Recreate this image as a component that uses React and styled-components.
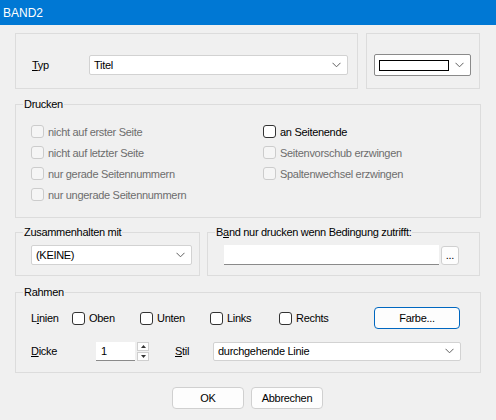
import React from "react";
import styled, { createGlobalStyle } from "styled-components";

const GlobalStyle = createGlobalStyle`
  html, body { margin: 0; padding: 0; background: #f0f0f0; }
  body {
    font-family: "Liberation Sans", Arial, sans-serif;
    font-size: 11px;
    letter-spacing: -0.3px;
    color: #000;
  }
`;

const Window = styled.div`
  width: 496px;
  height: 420px;
  background: #f0f0f0;
  display: flex;
  flex-direction: column;
  overflow: hidden;
`;

const TitleBar = styled.div`
  height: 25px;
  background: #0078d4;
  color: #fff;
  font-size: 12px;
  letter-spacing: 0;
  display: flex;
  align-items: center;
  padding-left: 3px;
  flex-shrink: 0;
`;

const Content = styled.div`
  display: flex;
  flex-direction: column;
  padding: 8px 16px 0 15px;
`;

const Row = styled.div`
  display: flex;
  gap: ${(p) => p.gap || 0}px;
  margin-top: ${(p) => p.mt || 0}px;
  justify-content: ${(p) => p.justify || "flex-start"};
`;

const Group = styled.div`
  position: relative;
  box-sizing: border-box;
  border: 1px solid #dcdcdc;
  width: ${(p) => p.w}px;
  height: ${(p) => p.h}px;
  margin-top: ${(p) => p.mt || 0}px;
  padding: ${(p) => p.pad || "0"};
`;

const Legend = styled.span`
  position: absolute;
  top: -7px;
  left: 7px;
  padding: 0 1px;
  background: #f0f0f0;
  line-height: 13px;
`;

const Label = styled.span`
  display: inline-block;
  width: ${(p) => p.w}px;
  margin-left: ${(p) => p.ml || 0}px;
  flex-shrink: 0;
`;

const Combo = styled.div`
  box-sizing: border-box;
  width: ${(p) => p.w}px;
  height: ${(p) => p.h || 20}px;
  background: #fff;
  border: 1px solid ${(p) => (p.dark ? "#8a8a8a" : "#d2d2d2")};
  border-radius: 2px;
  display: flex;
  align-items: center;
  padding: 0 6px 0 4px;
  justify-content: space-between;
`;

const Swatch = styled.div`
  width: 70px;
  height: 11px;
  box-sizing: border-box;
  border: 1px solid #000;
  background: #fff;
`;

const Chevron = () => (
  <svg width="9" height="6" viewBox="0 0 9 6">
    <path d="M0.5 0.8 L4.5 4.8 L8.5 0.8" fill="none" stroke="#606060" strokeWidth="1" />
  </svg>
);

const CheckGrid = styled.div`
  display: grid;
  grid-template-columns: 232px 1fr;
  grid-auto-flow: column;
  grid-template-rows: repeat(4, 21px);
  padding: 16px 0 0 15px;
`;

const CheckItem = styled.label`
  display: flex;
  align-items: center;
  gap: 4px;
  color: ${(p) => (p.disabled ? "#6d6d6d" : "#000")};
  width: ${(p) => (p.w ? p.w + "px" : "auto")};
  flex-shrink: 0;
`;

const Box = styled.span`
  box-sizing: border-box;
  width: 13px;
  height: 13px;
  border-radius: 3px;
  border: 1px solid ${(p) => (p.disabled ? "#cccccc" : "#333333")};
  background: ${(p) => (p.disabled ? "#f5f5f5" : "#fff")};
  flex-shrink: 0;
`;

const Check = ({ children, disabled, w }) => (
  <CheckItem disabled={disabled} w={w}>
    <Box disabled={disabled} />
    {children}
  </CheckItem>
);

const TextInput = styled.div`
  box-sizing: border-box;
  width: ${(p) => p.w}px;
  height: ${(p) => p.h || 20}px;
  background: #fff;
  border-bottom: 1px solid #8a8a8a;
  display: flex;
  align-items: center;
  padding-left: 5px;
`;

const Button = styled.div`
  box-sizing: border-box;
  width: ${(p) => p.w}px;
  height: ${(p) => p.h || 22}px;
  margin-left: ${(p) => p.ml || 0}px;
  background: #fdfdfd;
  border: 1px solid ${(p) => (p.primary ? "#0067c0" : "#d0d0d0")};
  border-radius: ${(p) => p.r || 4}px;
  display: flex;
  align-items: center;
  justify-content: center;
  flex-shrink: 0;
`;

const Line = styled.div`
  display: flex;
  align-items: center;
  height: ${(p) => p.h || 20}px;
  margin-top: ${(p) => p.mt || 0}px;
`;

const Spinner = styled.div`
  display: flex;
  flex-direction: column;
  gap: 1px;
  margin-left: 2px;
`;

const SpinBtn = styled.div`
  box-sizing: border-box;
  width: 12px;
  height: 9px;
  border: 1px solid #cfcfcf;
  background: #fdfdfd;
  display: flex;
  align-items: center;
  justify-content: center;
`;

const Tri = ({ down }) => (
  <svg width="5" height="3" viewBox="0 0 5 3">
    <path d={down ? "M0 0 L5 0 L2.5 3 Z" : "M0 3 L5 3 L2.5 0 Z"} fill="#333" />
  </svg>
);

export default function App() {
  return (
    <Window>
      <GlobalStyle />
      <TitleBar>BAND2</TitleBar>
      <Content>
        <Row gap={8}>
          <Group w={345} h={56} pad="21px 0 0 16px">
            <Line>
              <Label w={57}>
                <u>T</u>yp
              </Label>
              <Combo w={259}>
                Titel
                <Chevron />
              </Combo>
            </Line>
          </Group>
          <Group w={114} h={56} pad="20px 0 0 7px">
            <Combo w={97} h={22} dark>
              <Swatch />
              <Chevron />
            </Combo>
          </Group>
        </Row>

        <Group w={466} h={114} mt={15}>
          <Legend>Drucken</Legend>
          <CheckGrid>
            <Check disabled>nicht auf erster Seite</Check>
            <Check disabled>nicht auf letzter Seite</Check>
            <Check disabled>nur gerade Seitennummern</Check>
            <Check disabled>nur ungerade Seitennummern</Check>
            <Check>an Seitenende</Check>
            <Check disabled>Seitenvorschub erzwingen</Check>
            <Check disabled>Spaltenwechsel erzwingen</Check>
          </CheckGrid>
        </Group>

        <Row gap={7} mt={14}>
          <Group w={185} h={44} pad="12px 0 0 15px">
            <Legend>Zusammenhalten mit</Legend>
            <Combo w={161}>
              (KEINE)
              <Chevron />
            </Combo>
          </Group>
          <Group w={273} h={44} pad="12px 0 0 16px">
            <Legend>
              B<u>a</u>nd nur drucken wenn Bedingung zutrifft:
            </Legend>
            <Line>
              <TextInput w={215} />
              <Button w={18} h={19} ml={2} r={3}>
                ...
              </Button>
            </Line>
          </Group>
        </Row>

        <Group w={466} h={81} mt={16} pad="14px 0 0 15px">
          <Legend>Rahmen</Legend>
          <Line h={22}>
            <Label w={41}>
              L<u>i</u>nien
            </Label>
            <Check w={68}>Oben</Check>
            <Check w={70}>Unten</Check>
            <Check w={69}>Links</Check>
            <Check w={95}>Rechts</Check>
            <Button w={86} primary>
              Farbe...
            </Button>
          </Line>
          <Line h={20} mt={12}>
            <Label w={65}>
              <u>D</u>icke
            </Label>
            <TextInput w={39} h={19}>
              1
            </TextInput>
            <Spinner>
              <SpinBtn>
                <Tri />
              </SpinBtn>
              <SpinBtn>
                <Tri down />
              </SpinBtn>
            </Spinner>
            <Label w={38} ml={26}>
              <u>S</u>til
            </Label>
            <Combo w={248} h={19}>
              durchgehende Linie
              <Chevron />
            </Combo>
          </Line>
        </Group>

        <Row gap={7} mt={14} justify="center">
          <Button w={72}>OK</Button>
          <Button w={72}>Abbrechen</Button>
        </Row>
      </Content>
    </Window>
  );
}
